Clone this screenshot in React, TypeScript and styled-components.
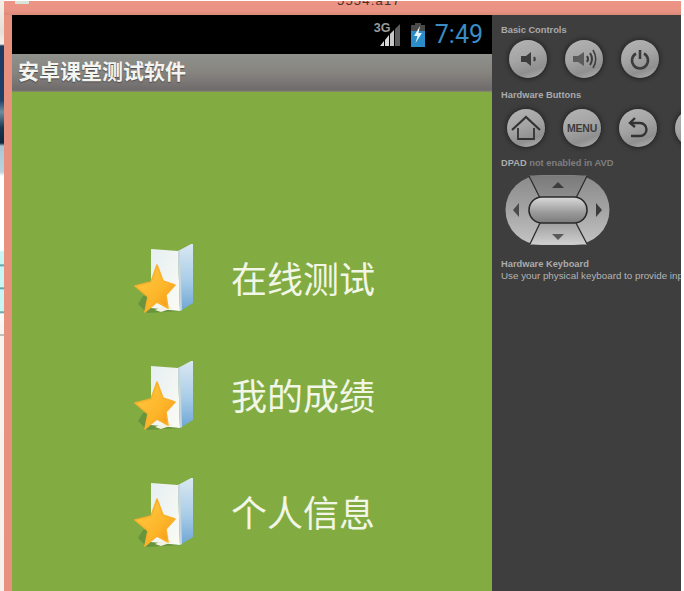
import React from "react";
import styled, { createGlobalStyle } from "styled-components";

const GlobalStyle = createGlobalStyle`
  html, body {
    margin: 0;
    padding: 0;
    width: 684px;
    height: 591px;
    overflow: hidden;
    background: #ffffff;
    font-family: "Liberation Sans", Arial, sans-serif;
  }
`;

const Screen = styled.div`
  display: flex;
  width: 684px;
  height: 591px;
  overflow: hidden;
  background: #ffffff;
`;

const DesktopStrip = styled.div`
  width: 4px;
  flex-shrink: 0;
  background: linear-gradient(
    180deg,
    #f4efe8 0,
    #e6dfd8 32px,
    #f2efe9 44px,
    #1d3a63 46px,
    #1d3f68 100px,
    #6f8fa0 112px,
    #16364f 128px,
    #10283c 143px,
    #a9c6d6 146px,
    #bcd3df 172px,
    #ffffff 176px,
    #ffffff 250px,
    #c8f6f6 252px,
    #c8f6f6 264px,
    #3f8f96 265px,
    #c8f6f6 267px,
    #c8f6f6 287px,
    #3f8f96 288px,
    #c8f6f6 290px,
    #c8f6f6 311px,
    #3f8f96 312px,
    #f8fbfb 314px,
    #f8f4f0 334px,
    #7f8f90 335px,
    #f8f4f0 336px,
    #f6f1ec 591px
  );
`;

const EmulatorWindow = styled.div`
  width: 677px;
  height: 591px;
  flex-shrink: 0;
  display: flex;
  flex-direction: column;
  overflow: hidden;
  padding-top: 1px;
  box-sizing: border-box;
`;

const TitleStrip = styled.div`
  position: relative;
  height: 14px;
  flex-shrink: 0;
  overflow: hidden;
  padding-left: 333px;
  background: linear-gradient(180deg, #ec9585 0, #ea9283 70%, #d98a78 100%);
`;

const WindowTitle = styled.div`
  margin-top: -8px;
  font-size: 13px;
  line-height: 15px;
  letter-spacing: 1.2px;
  color: #4a2f2a;
`;

const TaskbarThumb = styled.div`
  position: absolute;
  left: 11px;
  top: -1px;
  width: 14px;
  height: 4px;
  background: #d8e4da;
`;

const WindowBody = styled.div`
  flex: 1;
  display: flex;
  min-height: 0;
  background: #e8917f;
  padding-left: 8px;
`;

const Phone = styled.div`
  width: 480px;
  flex-shrink: 0;
  display: flex;
  flex-direction: column;
`;

const StatusBar = styled.div`
  height: 39px;
  flex-shrink: 0;
  display: flex;
  align-items: center;
  justify-content: flex-end;
  gap: 7px;
  padding-right: 9px;
  background: #000000;
`;

const NetworkIcon = styled.div`
  position: relative;
  width: 28px;
  height: 25px;
  margin-right: 1px;
`;

const NetworkLabel = styled.span`
  position: absolute;
  left: 0;
  top: 0;
  font-size: 12.5px;
  line-height: 13px;
  font-weight: 700;
  color: #9a9a9a;
`;

const Clock = styled.span`
  font-family: Roboto, "Liberation Sans", sans-serif;
  font-size: 25px;
  line-height: 30px;
  margin-left: 2px;
  color: #3a8cc2;
`;

const ActionBar = styled.div`
  height: 38px;
  flex-shrink: 0;
  display: flex;
  align-items: center;
  box-sizing: border-box;
  padding-left: 6px;
  background: linear-gradient(180deg, #8f918d 0, #86847f 50%, #6f6a6b 95%, #8a9368 100%);
`;

const AppTitle = styled.h1`
  margin: 0 0 7px;
  font-family: "Noto Sans CJK SC", sans-serif;
  font-size: 21px;
  line-height: 28px;
  font-weight: 700;
  color: #f4f4f0;
  text-shadow: 0 1px 1px rgba(40, 40, 40, 0.6);
`;

const Menu = styled.div`
  flex: 1;
  display: flex;
  flex-direction: column;
  padding-top: 128px;
  background: #82ab41;
`;

const MenuRow = styled.div`
  height: 117px;
  display: flex;
  align-items: center;
  gap: 36px;
  padding-left: 121px;
`;

const MenuLabel = styled.span`
  font-family: "Noto Sans CJK SC", sans-serif;
  font-size: 36px;
  line-height: 48px;
  padding-bottom: 4px;
  color: #f1f6e6;
`;

const SidePanel = styled.div`
  flex: 1;
  min-width: 0;
  overflow: hidden;
  white-space: nowrap;
  padding: 10px 0 0 9px;
  background: #3e3e3e;
`;

const SectionLabel = styled.div<{ $gap?: number }>`
  font-size: 9.3px;
  line-height: 11px;
  font-weight: 700;
  color: #ababab;
  margin-top: ${(p) => p.$gap ?? 0}px;
`;

const HintText = styled.div`
  font-size: 9.8px;
  line-height: 11px;
  color: #b4b4b4;
`;

const Muted = styled.span`
  color: #7e7e7e;
`;

const ButtonRow = styled.div<{ $inset: number; $top: number }>`
  display: flex;
  gap: 18px;
  margin-top: ${(p) => p.$top}px;
  padding-left: ${(p) => p.$inset}px;
`;

const RoundButton = styled.div`
  width: 38px;
  height: 38px;
  flex-shrink: 0;
  display: flex;
  align-items: center;
  justify-content: center;
  border-radius: 50%;
  background: linear-gradient(160deg, #b4b4b4 0%, #a4a4a4 45%, #8f8f8f 75%, #b8b8b8 100%);
  box-shadow: 0 0 5px 1px rgba(0, 0, 0, 0.45);
  color: #3a3a3a;
`;

const MenuText = styled.span`
  font-size: 10.5px;
  font-weight: 700;
  letter-spacing: -0.2px;
  color: #3c3c3c;
`;

const DpadWrap = styled.div`
  margin: 5px 0 0 4px;
  width: 105px;
  height: 72px;
`;

const FolderStar = ({ id }: { id: string }) => (
  <svg width="62" height="70" viewBox="0 0 62 70">
    <defs>
      <linearGradient id={`${id}p`} x1="0" y1="0" x2="1" y2="1">
        <stop offset="0" stopColor="#e6eff2" />
        <stop offset="1" stopColor="#fbfbf4" />
      </linearGradient>
      <linearGradient id={`${id}b`} x1="0" y1="0" x2="0" y2="1">
        <stop offset="0" stopColor="#dbe9f2" />
        <stop offset="0.55" stopColor="#a9cde8" />
        <stop offset="1" stopColor="#6ea6d4" />
      </linearGradient>
      <linearGradient id={`${id}s`} x1="0" y1="0" x2="1" y2="1">
        <stop offset="0" stopColor="#ffcc45" />
        <stop offset="0.6" stopColor="#fdb52a" />
        <stop offset="1" stopColor="#f08f10" />
      </linearGradient>
      <filter id={`${id}f`}>
        <feGaussianBlur stdDeviation="0.6" />
      </filter>
    </defs>
    <g filter={`url(#${id}f)`}>
      <path d="M10 52 L5 60 L14 69 L48 67 L40 40 Z" fill="#5d8a3c" opacity="0.7" />
      <path d="M18 5 L45 7 L47 67 L18 64 Z" fill={`url(#${id}p)`} />
      <path d="M45 7 L60 -1 L60 59 L47 67 Z" fill={`url(#${id}b)`} />
      <path d="M45 7 L47 67 L49 66 L47 6 Z" fill="#c9d6dc" />
      <path d="M22 66 L34 61 L40 64 L28 68 Z" fill="#f2f2e0" />
      <path
        d="M24 21 L30 37 L42 41 L33 51 L35 64 L24 58 L12 68 L15 53 L2 42 L18 38 Z"
        fill={`url(#${id}s)`}
        stroke="#fab02a"
        strokeWidth="1.6"
        strokeLinejoin="round"
      />
    </g>
  </svg>
);

const SignalBars = () => (
  <svg width="28" height="25" viewBox="0 0 28 25">
    <path d="M6 24 L10 24 L10 19 Z" fill="#d8d8d8" />
    <path d="M11 24 L15 24 L15 13 L11 18 Z" fill="#d8d8d8" />
    <path d="M16 24 L20 24 L20 8 L16 12 Z" fill="#c8c8c8" />
    <path d="M21 24 L26 24 L26 2 L21 7 Z" fill="#5c5c5c" />
  </svg>
);

const Battery = () => (
  <svg width="16" height="24" viewBox="0 0 16 24">
    <rect x="5" y="0" width="6" height="3" fill="#4a4a4a" />
    <rect x="1" y="2" width="14" height="7" fill="#4a4a4a" />
    <rect x="1" y="8" width="14" height="16" fill="#2a8cc8" />
    <path d="M10 3 L4 13 L7.5 13 L5.5 20 L12 10 L8.5 10 Z" fill="#e8f4fa" />
  </svg>
);

const VolumeDown = () => (
  <svg width="24" height="24" viewBox="0 0 24 24" fill="#3c3c3c">
    <path d="M5 9 H10 L15 5 V19 L10 15 H5 Z" />
    <path d="M18 10 Q19.5 12 18 14" stroke="#3c3c3c" strokeWidth="2" fill="none" />
  </svg>
);

const VolumeUp = () => (
  <svg width="28" height="28" viewBox="0 0 28 28" fill="none" stroke="#3c3c3c">
    <path d="M3 11 H8 L14 7 V21 L8 17 H3 Z" fill="#5c5c5c" stroke="none" />
    <path d="M17 11 Q19 14 17 17" strokeWidth="2" />
    <path d="M20 8 Q24 14 20 20" strokeWidth="2" />
    <path d="M23 5 Q28.5 14 23 23" strokeWidth="1.5" />
  </svg>
);

const Power = () => (
  <svg width="24" height="24" viewBox="0 0 24 24" fill="none" stroke="#3c3c3c" strokeWidth="2.6">
    <path d="M8 6.5 A8 8 0 1 0 16 6.5" />
    <path d="M12 3 V12" />
  </svg>
);

const Home = () => (
  <svg width="32" height="30" viewBox="0 0 32 30" fill="none" stroke="#333333" strokeWidth="2.2">
    <path d="M2 17 L16 4 L30 17" />
    <path d="M8 15 V26 H24 V15" strokeWidth="1.8" />
  </svg>
);

const Back = () => (
  <svg width="26" height="26" viewBox="0 0 26 26" fill="none" stroke="#333333" strokeWidth="2.4">
    <path d="M10 3 L5 8 L10 12" />
    <path d="M5 8 H15 A6.5 6.5 0 0 1 15 21 H6" />
  </svg>
);

const Dpad = () => (
  <svg width="105" height="72" viewBox="0 0 105 72">
    <defs>
      <linearGradient id="dpadBody" x1="0" y1="0" x2="0" y2="1">
        <stop offset="0" stopColor="#8a8a8a" />
        <stop offset="0.5" stopColor="#a4a4a4" />
        <stop offset="1" stopColor="#c4c4c4" />
      </linearGradient>
      <linearGradient id="dpadTop" x1="0" y1="0" x2="0" y2="1">
        <stop offset="0" stopColor="#7a7a7a" />
        <stop offset="1" stopColor="#8e8e8e" />
      </linearGradient>
      <linearGradient id="dpadBottom" x1="0" y1="0" x2="0" y2="1">
        <stop offset="0" stopColor="#a0a0a0" />
        <stop offset="1" stopColor="#cfcfcf" />
      </linearGradient>
      <linearGradient id="dpadPill" x1="0" y1="0" x2="0" y2="1">
        <stop offset="0" stopColor="#dadada" />
        <stop offset="0.6" stopColor="#9a9a9a" />
        <stop offset="1" stopColor="#7c7c7c" />
      </linearGradient>
    </defs>
    <rect x="0.5" y="1" width="104" height="70" rx="36" ry="35" fill="url(#dpadBody)" />
    <path d="M24 1.5 H82 L71 24 H35 Z" fill="url(#dpadTop)" />
    <path d="M35 49 H71 L82 70.5 H25 Z" fill="url(#dpadBottom)" />
    <g stroke="#2c2c2c" strokeWidth="1.3" fill="none">
      <path d="M24 2 L35 24" />
      <path d="M82 2 L71 24" />
      <path d="M35 49 L25 70" />
      <path d="M71 49 L82 70" />
    </g>
    <rect x="24" y="23" width="58" height="26" rx="13" fill="url(#dpadPill)" stroke="#2a2a2a" strokeWidth="1.6" />
    <path d="M53 8 L59 14 H47 Z" fill="#3c3c3c" />
    <path d="M47 60 H59 L53 66 Z" fill="#5a5a5a" />
    <path d="M8 36 L14 29 V43 Z" fill="#4a4a4a" />
    <path d="M97 36 L91 29 V43 Z" fill="#3c3c3c" />
  </svg>
);

const menuItems = ["在线测试", "我的成绩", "个人信息"];

export default function App() {
  return (
    <>
      <GlobalStyle />
      <Screen>
        <DesktopStrip />
        <EmulatorWindow>
          <TitleStrip>
            <TaskbarThumb />
            <WindowTitle>5554:a17</WindowTitle>
          </TitleStrip>
          <WindowBody>
            <Phone>
              <StatusBar>
                <NetworkIcon>
                  <SignalBars />
                  <NetworkLabel>3G</NetworkLabel>
                </NetworkIcon>
                <Battery />
                <Clock>7:49</Clock>
              </StatusBar>
              <ActionBar>
                <AppTitle>安卓课堂测试软件</AppTitle>
              </ActionBar>
              <Menu>
                {menuItems.map((label, i) => (
                  <MenuRow key={label}>
                    <FolderStar id={`fs${i}`} />
                    <MenuLabel>{label}</MenuLabel>
                  </MenuRow>
                ))}
              </Menu>
            </Phone>
            <SidePanel>
              <SectionLabel>Basic Controls</SectionLabel>
              <ButtonRow $inset={8} $top={4}>
                <RoundButton><VolumeDown /></RoundButton>
                <RoundButton><VolumeUp /></RoundButton>
                <RoundButton><Power /></RoundButton>
              </ButtonRow>
              <SectionLabel $gap={12}>Hardware Buttons</SectionLabel>
              <ButtonRow $inset={6} $top={8}>
                <RoundButton><Home /></RoundButton>
                <RoundButton><MenuText>MENU</MenuText></RoundButton>
                <RoundButton><Back /></RoundButton>
                <RoundButton />
              </ButtonRow>
              <SectionLabel $gap={11}>
                DPAD <Muted>not enabled in AVD</Muted>
              </SectionLabel>
              <DpadWrap><Dpad /></DpadWrap>
              <SectionLabel $gap={13}>Hardware Keyboard</SectionLabel>
              <HintText>Use your physical keyboard to provide input</HintText>
            </SidePanel>
          </WindowBody>
        </EmulatorWindow>
      </Screen>
    </>
  );
}
